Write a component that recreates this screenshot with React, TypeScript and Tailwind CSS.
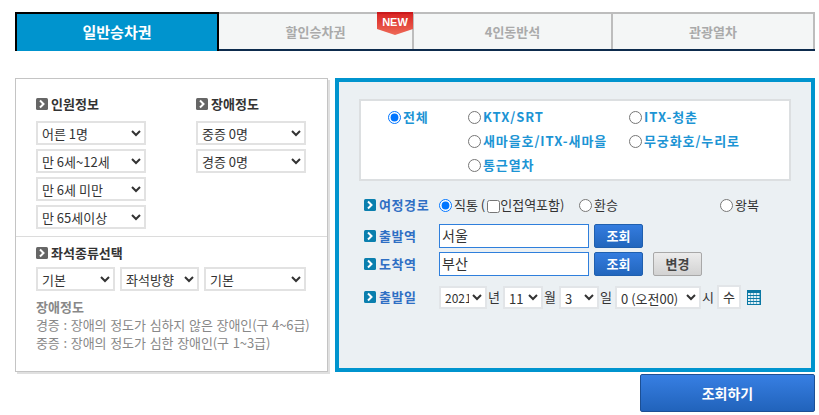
const font = "[font-family:'Noto_Sans_CJK_KR','Liberation_Sans',sans-serif]";

const Bullet = ({ blue = false }: { blue?: boolean }) => (
  <svg width="12" height="12" viewBox="0 0 12 12" className="shrink-0">
    <rect width="12" height="12" rx="1.5" fill={blue ? "#0a7fae" : "#666666"} />
    <path d="M4 2.5 L7.5 6 L4 9.5" fill="none" stroke="#ffffff" strokeWidth="2" />
  </svg>
);

const Select = ({ label, className }: { label: string; className: string }) => (
  <select className={`h-[24px] border-2 border-[#e2e2e2] bg-white text-[13px] text-[#333] ${className}`}>
    <option>{label}</option>
  </select>
);

const DateSelect = ({ label, className }: { label: string; className: string }) => (
  <select className={`h-[23px] border-2 border-[#e2e5e8] bg-white text-[13px] text-[#333] ${className}`}>
    <option>{label}</option>
  </select>
);

const Radio = ({ label, checked = false }: { label: string; checked?: boolean }) => (
  <label className="flex items-center gap-[2px] text-[13px] font-bold tracking-[0.9px] whitespace-nowrap text-[#1c94d4]">
    <input type="radio" name="train" defaultChecked={checked} />
    {label}
  </label>
);

const Tab = ({ label, className }: { label: string; className: string }) => (
  <div className={`flex items-center justify-center border-r-2 border-[#bdbdbd] text-[13px] font-bold text-[#aaaaaa] ${className}`}>
    {label}
  </div>
);

const BlueButton = ({ label }: { label: string }) => (
  <button className="ml-[5px] h-[24px] w-[49px] rounded-[2px] border border-[#1f5fae] bg-gradient-to-b from-[#347cdf] to-[#2266bd] text-[13px] font-bold text-white">
    {label}
  </button>
);

const RowLabel = ({ label }: { label: string }) => (
  <div className="flex w-[75px] shrink-0 items-center gap-[3px] text-[13px] font-bold tracking-[0.6px] text-[#2f6fc4]">
    <Bullet blue />
    {label}
  </div>
);

const Calendar = () => (
  <svg width="14" height="15" viewBox="0 0 14 15" className="ml-[6px]">
    <rect width="14" height="15" fill="#0a78a4" />
    {[3, 6, 9, 12].map((y) =>
      [1, 4, 7, 10].map((x) => <rect key={`${x}-${y}`} x={x} y={y} width="2.5" height="2" fill="#dff0f6" />),
    )}
  </svg>
);

export default function App() {
  return (
    <div className={`h-[415px] w-[819px] overflow-hidden bg-white pt-[12px] pl-[15px] ${font}`}>
      {/* tabs */}
      <div className="relative flex h-[39px] w-[800px] border-t-2 border-b-2 border-t-[#bdbdbd] border-b-[#0d2b4d] bg-[#f4f6f6]">
        <div className="-mt-[2px] -mb-[2px] flex h-[39px] w-[204px] items-center justify-center border-x-2 border-t-2 border-black bg-[#0094ce] text-[15px] font-bold text-white">
          일반승차권
        </div>
        <Tab label="할인승차권" className="w-[195px]" />
        <Tab label="4인동반석" className="w-[199px]" />
        <Tab label="관광열차" className="w-[202px]" />
        <div className="absolute -top-[2px] left-[362px] h-[24px] w-[36px]">
          <svg width="36" height="24" viewBox="0 0 36 24" className="absolute inset-0">
            <defs>
              <linearGradient id="ribbon" x1="0" y1="0" x2="0" y2="1">
                <stop offset="0" stopColor="#d8201f" />
                <stop offset="1" stopColor="#ee6a58" />
              </linearGradient>
            </defs>
            <path d="M0 0 H36 V17 L18 23 L0 17 Z" fill="url(#ribbon)" />
            <rect width="36" height="2" fill="#c9191c" />
          </svg>
          <span className="absolute inset-x-0 top-[3px] text-center text-[11px] leading-[14px] font-bold text-white [font-family:'Liberation_Sans',sans-serif]">
            NEW
          </span>
        </div>
      </div>

      <div className="mt-[27px] flex items-start">
        {/* left panel */}
        <div className="h-[294px] w-[313px] border border-[#c4c4c4] shadow-[2px_2px_0_#e0e0e0]">
          <div className="flex h-[157px] pt-[16px] pl-[20px]">
            <div className="w-[160px]">
              <div className="flex h-[18px] items-center gap-[3px] text-[13px] font-bold text-[#333]">
                <Bullet />
                인원정보
              </div>
              <div className="mt-[8px] flex flex-col gap-[4px]">
                <Select label="어른 1명" className="w-[110px]" />
                <Select label="만 6세~12세" className="w-[110px]" />
                <Select label="만 6세 미만" className="w-[110px]" />
                <Select label="만 65세이상" className="w-[110px]" />
              </div>
            </div>
            <div>
              <div className="flex h-[18px] items-center gap-[3px] text-[13px] font-bold text-[#333]">
                <Bullet />
                장애정도
              </div>
              <div className="mt-[8px] flex flex-col gap-[4px]">
                <Select label="중증 0명" className="w-[110px]" />
                <Select label="경증 0명" className="w-[110px]" />
              </div>
            </div>
          </div>
          <div className="border-t border-[#dcdcdc] pt-[7px] pl-[20px]">
            <div className="flex h-[18px] items-center gap-[3px] text-[13px] font-bold text-[#333]">
              <Bullet />
              좌석종류선택
            </div>
            <div className="mt-[5px] flex gap-[5px]">
              <Select label="기본" className="w-[79px]" />
              <Select label="좌석방향" className="w-[79px]" />
              <Select label="기본" className="w-[102px]" />
            </div>
            <div className="mt-[7px] text-[13px] leading-[18px] font-bold text-[#888]">장애정도</div>
            <div className="text-[13px] leading-[18px] tracking-[-0.1px] whitespace-nowrap text-[#888] [word-spacing:1px]">
              <div>경증 : 장애의 정도가 심하지 않은 장애인(구 4~6급)</div>
              <div>중증 : 장애의 정도가 심한 장애인(구 1~3급)</div>
            </div>
          </div>
        </div>

        {/* right panel */}
        <div className="ml-[7px] h-[294px] w-[480px] border-[4px] border-[#0094ce] bg-[#ebf0f3] pt-[17px] pl-[20px]">
          <div className="grid h-[82px] w-[432px] grid-cols-[80px_161px_auto] grid-rows-[24px_24px_24px] content-center border-2 border-[#dcdfe1] bg-white pt-[2px] pl-[27px]">
            <Radio label="전체" checked />
            <Radio label="KTX/SRT" />
            <Radio label="ITX-청춘" />
            <div />
            <Radio label="새마을호/ITX-새마을" />
            <Radio label="무궁화호/누리로" />
            <div />
            <Radio label="통근열차" />
          </div>

          <div className="mt-[15px] flex h-[18px] items-center pl-[5px] text-[13px] text-[#333]">
            <RowLabel label="여정경로" />
            <label className="flex w-[140px] items-center gap-[2px] whitespace-nowrap">
              <input type="radio" name="route" defaultChecked />
              직통 (
              <input type="checkbox" className="mt-[3px] -mr-[2px]" />
              인접역포함)
            </label>
            <label className="flex w-[141px] items-center gap-[2px]">
              <input type="radio" name="route" />
              환승
            </label>
            <label className="flex items-center gap-[2px]">
              <input type="radio" name="route" />
              왕복
            </label>
          </div>

          <div className="mt-[10px] flex items-center pl-[5px]">
            <RowLabel label="출발역" />
            <input
              defaultValue="서울"
              className="h-[24px] w-[150px] border border-[#2f7fdc] bg-white px-[2px] pb-[3px] text-[14px] text-[#333]"
            />
            <BlueButton label="조회" />
          </div>
          <div className="mt-[4px] flex items-center pl-[5px]">
            <RowLabel label="도착역" />
            <input
              defaultValue="부산"
              className="h-[24px] w-[150px] border border-[#2f7fdc] bg-white px-[2px] pb-[3px] text-[14px] text-[#333]"
            />
            <BlueButton label="조회" />
            <button className="ml-[10px] h-[24px] w-[49px] rounded-[2px] border border-[#a8a8a8] bg-gradient-to-b from-[#ececec] to-[#d2d2d2] text-[13px] font-bold text-[#444]">
              변경
            </button>
          </div>

          <div className="mt-[9px] flex items-center pl-[5px] text-[13px] text-[#333]">
            <RowLabel label="출발일" />
            <select className="h-[23px] w-[48px] border-2 border-[#e2e5e8] bg-white text-[12px] text-[#333]">
              <option>2021</option>
            </select>
            <span className="w-[16px] pl-[1px]">년</span>
            <DateSelect label="11" className="w-[40px]" />
            <span className="w-[16px] pl-[1px]">월</span>
            <DateSelect label="3" className="w-[40px]" />
            <span className="w-[16px] pl-[1px]">일</span>
            <DateSelect label="0 (오전00)" className="w-[86px]" />
            <span className="w-[16px] pl-[1px]">시</span>
            <div className="flex h-[24px] w-[24px] items-center justify-center border-2 border-[#e2e5e8] bg-white">
              수
            </div>
            <Calendar />
          </div>
        </div>
      </div>

      <div className="mt-[2px] flex w-[800px] justify-end">
        <button className="h-[38px] w-[175px] rounded-[2px] border border-[#1c4f94] bg-gradient-to-b from-[#377fe3] to-[#2163bb] text-[14px] font-bold text-white">
          조회하기
        </button>
      </div>
    </div>
  );
}
